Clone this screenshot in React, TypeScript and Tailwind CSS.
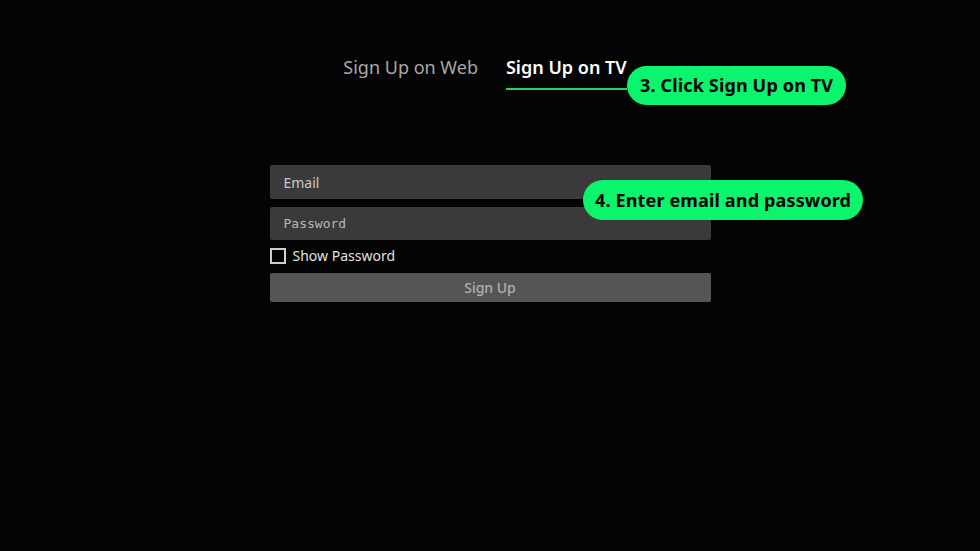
export default function App() {
  return (
    <div className="relative h-[551px] w-full overflow-hidden bg-[#040404] font-['Noto_Sans',sans-serif]">
      <div className="mx-auto w-[441px] pt-[53px]">
        <div className="flex justify-center gap-[28px] pr-[10px]">
          <div className="pb-[9px] text-[18px] leading-[28px] text-[#a8a8a8]">Sign Up on Web</div>
          <div className="border-b-2 border-[#1fd760] pb-[7px] text-[18px] font-semibold leading-[28px] text-white">Sign Up on TV</div>
        </div>

        <div className="mt-[75px] flex flex-col">
          <div className="flex h-[34px] items-center rounded-[2px] bg-[#3a3a3a] px-[14px] text-[14px] text-[#c8c8c8]">Email</div>
          <div className="mt-[8px] flex h-[33px] items-center rounded-[2px] bg-[#3a3a3a] px-[14px] font-['DejaVu_Sans_Mono',monospace] text-[13px] text-[#b8b8b8]">Password</div>
          <label className="mt-[8px] flex items-center gap-[7px] text-[14px] leading-[16px] text-[#e0e0e0]">
            <span className="h-[16px] w-[16px] border-2 border-[#cfcfcf]" />
            Show Password
          </label>
          <div className="mt-[9px] flex h-[29px] items-center justify-center rounded-[2px] bg-[#555555] text-[14px] font-medium text-[#b0b0b0]">Sign Up</div>
        </div>
      </div>

      <div className="absolute left-[627px] top-[66px] flex h-[39px] items-center rounded-full bg-[#0af56d] px-[13px] text-[18px] font-bold tracking-[0.15px] text-black">
        3. Click Sign Up on TV
      </div>
      <div className="absolute left-[583px] top-[180px] flex h-[40px] items-center rounded-full bg-[#0af56d] px-[12px] text-[18px] font-bold tracking-[0.15px] text-black">
        4. Enter email and password
      </div>
    </div>
  )
}
